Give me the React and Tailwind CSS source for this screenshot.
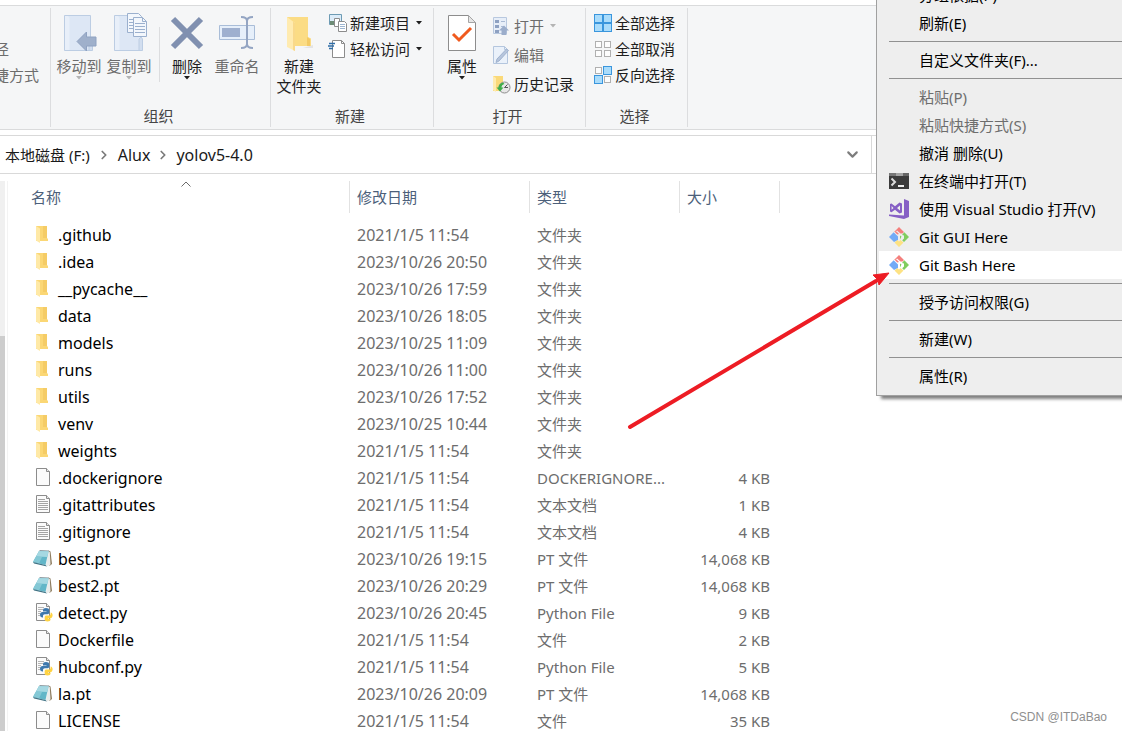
import { useState } from 'react'
import clsx from 'clsx'
import { ChevronDown, ChevronRight } from 'lucide-react'

const FILES = [
  { name: '.github', date: '2021/1/5 11:54', kind: 'folder', type: '文件夹' },
  { name: '.idea', date: '2023/10/26 20:50', kind: 'folder', type: '文件夹' },
  { name: '__pycache__', date: '2023/10/26 17:59', kind: 'folder', type: '文件夹' },
  { name: 'data', date: '2023/10/26 18:05', kind: 'folder', type: '文件夹' },
  { name: 'models', date: '2023/10/25 11:09', kind: 'folder', type: '文件夹' },
  { name: 'runs', date: '2023/10/26 11:00', kind: 'folder', type: '文件夹' },
  { name: 'utils', date: '2023/10/26 17:52', kind: 'folder', type: '文件夹' },
  { name: 'venv', date: '2023/10/25 10:44', kind: 'folder', type: '文件夹' },
  { name: 'weights', date: '2021/1/5 11:54', kind: 'folder', type: '文件夹' },
  { name: '.dockerignore', date: '2021/1/5 11:54', kind: 'blank', type: 'DOCKERIGNORE...', size: '4 KB' },
  { name: '.gitattributes', date: '2021/1/5 11:54', kind: 'text', type: '文本文档', size: '1 KB' },
  { name: '.gitignore', date: '2021/1/5 11:54', kind: 'text', type: '文本文档', size: '4 KB' },
  { name: 'best.pt', date: '2023/10/26 19:15', kind: 'pt', type: 'PT 文件', size: '14,068 KB' },
  { name: 'best2.pt', date: '2023/10/26 20:29', kind: 'pt', type: 'PT 文件', size: '14,068 KB' },
  { name: 'detect.py', date: '2023/10/26 20:45', kind: 'python', type: 'Python File', size: '9 KB' },
  { name: 'Dockerfile', date: '2021/1/5 11:54', kind: 'blank', type: '文件', size: '2 KB' },
  { name: 'hubconf.py', date: '2021/1/5 11:54', kind: 'python', type: 'Python File', size: '5 KB' },
  { name: 'la.pt', date: '2023/10/26 20:09', kind: 'pt', type: 'PT 文件', size: '14,068 KB' },
  { name: 'LICENSE', date: '2021/1/5 11:54', kind: 'blank', type: '文件', size: '35 KB' },
]

const MENU = [
  { label: '分组依据(P)' },
  { label: '刷新(E)' },
  { separator: true },
  { label: '自定义文件夹(F)...' },
  { separator: true },
  { label: '粘贴(P)', disabled: true },
  { label: '粘贴快捷方式(S)', disabled: true },
  { label: '撤消 删除(U)' },
  { label: '在终端中打开(T)', icon: TerminalIcon },
  { label: '使用 Visual Studio 打开(V)', icon: VisualStudioIcon },
  { label: 'Git GUI Here', icon: GitIcon },
  { label: 'Git Bash Here', icon: GitIcon },
  { separator: true },
  { label: '授予访问权限(G)' },
  { separator: true },
  { label: '新建(W)' },
  { separator: true },
  { label: '属性(R)' },
]

/* ---------- Menu icons ---------- */

function TerminalIcon() {
  return (
    <svg width="20" height="20" viewBox="0 0 20 20">
      <path d="M0 2h20v16H0z" fill="#3b3b3b" />
      <path d="M0 2h7v3H0z" fill="#777" />
      <path d="M7 2h7v3H7z" fill="#a3a3a3" />
      <path d="M14 2h6v3h-6z" fill="#666" />
      <path d="M2.500 7.500L6 11l-3.500 3.500" fill="none" stroke="#ddd" strokeWidth="2" />
      <path d="M9 14h6v2H9z" fill="#eee" />
    </svg>
  )
}

function VisualStudioIcon() {
  return (
    <svg width="20" height="20" viewBox="0 0 20 20" fill="#865fc5">
      <path d="M15 0l5 2v16l-5 2-15-3v-1.500l15 1z" />
      <path
        d="M1 5l1.500-.5L6 7.300l4.500-3.800L13 4.500v9L10.500 14.500 6 10.800 2.500 13.200 1 12.600zM2.600 7v3.800L4.500 9zM8 9l3 2.500v-5z"
        fillRule="evenodd"
      />
    </svg>
  )
}

function GitIcon() {
  return (
    <svg width="20" height="20" viewBox="0 0 20 20">
      <path d="M10 0l5 5-1.500 1.500-2 0L8 3.500 6.500 5 5 5z" fill="#f47f7c" />
      <path d="M7.500 4.500L10 7l-1.500.5-2.500-2z" fill="#f47f7c" />
      <path d="M4.700 5.300L9 9.600V13l-4 2L0 10z" fill="#72aaf6" />
      <path d="M15.300 5.300L20 10l-5 5-1.800-1.800 1.800-1.700v-3l-2-.5z" fill="#80cd5e" />
      <path d="M11 8.500l1.500 1-1.500 3z" fill="#80cd5e" />
      <path d="M5.500 15.500l3-2.500 1.500 1.500 1.500-1.500 3 2.500L10 20z" fill="#fde283" />
    </svg>
  )
}

/* ---------- File icons ---------- */

function FileIcon({ kind }) {
  if (kind === 'folder') {
    return (
      <svg width="20" height="20" viewBox="0 0 20 20">
        <path d="M3 1h11v12l1 1v2H3z" fill="#fbd775" />
        <path d="M10 1h4v12h-4z" fill="#f5cc66" />
        <path d="M3 1l4 2.500V18l-4-2.500z" fill="#ffe9a6" />
      </svg>
    )
  }
  if (kind === 'pt') {
    return (
      <svg width="20" height="20" viewBox="0 0 20 20">
        <path d="M15.500 1.500l2 1L19 15l-2.500 2z" fill="#8c7a5c" />
        <path d="M15 2l1.800 1 .7 12.500-3.500 2-1-2z" fill="#e9eceb" />
        <path d="M6.500 1L16 1.500v1l-9.500-.5z" fill="#8d9aa0" />
        <path d="M6 2l9.500 0.500-3 13.500L0 13z" fill="#62b6c8" />
        <path d="M6 2l9.500.5-1.200 5.500L3 7.500z" fill="#a5d8e2" />
        <path d="M3 7.500L9 8 6 14.500 0 13z" fill="#84c8d5" />
        <path d="M0 13l12.500 3 1.500 1.500L1 14.500z" fill="#3f7284" />
      </svg>
    )
  }
  return (
    <svg width="20" height="20" viewBox="0 0 20 20">
      <path d="M3.500.5h10l3 3v14h-13z" fill="#fbfbfb" stroke="#8c8c8c" />
      <path d="M13.500.5v3h3" fill="#e8e8e8" stroke="#8c8c8c" />
      {kind === 'text' && (
        <path d="M5 4.500h7M5 6.500h10M5 8.500h10M5 10.500h10M5 12.500h10M5 14.500h10" stroke="#a4a4a4" />
      )}
      {kind === 'python' && (
        <>
          <path d="M5 4.500h6M5 6.500h5M5 8.500h3M5 10.500h2M5 12.500h2" stroke="#b5b5b5" />
          <path
            d="M13 5c-2 0-3 .7-3 2v1.500h3.500v.5H9.500c-1.500 0-2.500 1-2.500 2.800s1 2.800 2.500 2.800h.5v-1.600c0-1 .8-1.700 1.800-1.700h2.700c1 0 1.700-.8 1.700-1.700V7c0-1.300-1.200-2-3.200-2z"
            fill="#3d78ad"
          />
          <path
            d="M14.500 18.500c-2 0-2.800-.7-2.800-2v-2.300c0-1 .8-1.700 1.700-1.700h2.600c1 0 1.600-.8 1.600-1.800V9.500c1.300.2 2 1.300 2 2.700s-.8 3-2.200 3h-2.400v.6H17.500v.8c0 1.300-1 1.900-3 1.900z"
            fill="#ffd343"
          />
        </>
      )}
    </svg>
  )
}

/* ---------- Ribbon icons ---------- */

function PaleFolder() {
  return (
    <>
      <path d="M3.500 3.500h26v35h-26z" fill="#dde7f5" stroke="#bccde3" />
      <path d="M4 4h3l1.500 2v32H4z" fill="#e8eff9" />
      <path d="M28 38.500V27l2-2 1.500 2v11.500z" fill="#d2deef" stroke="#bccde3" />
    </>
  )
}

function MoveIcon() {
  return (
    <svg width="36" height="40" viewBox="0 0 36 40">
      <PaleFolder />
      <path d="M16 29.500L25.500 20v5H35v9h-9.500v5z" fill="#9fb0cb" stroke="#8fa2c1" />
    </svg>
  )
}

function CopyIcon() {
  return (
    <svg width="36" height="40" viewBox="0 0 36 40">
      <PaleFolder />
      <path d="M16.500 1.500h11l3 3v16h-14z" fill="#f3f7fc" stroke="#9bb0ce" />
      <path d="M18 7.500h4M18 10.500h4M18 13.500h4M18 16.500h4" stroke="#9bb0ce" />
      <path d="M22.500 5.500h9l4 4v15h-13z" fill="#f3f7fc" stroke="#9bb0ce" />
      <path d="M31.500 5.500v4h4M24 11.500h10M24 14.500h10M24 17.500h10M24 20.500h10" fill="none" stroke="#9bb0ce" />
    </svg>
  )
}

function DeleteIcon() {
  return (
    <svg width="36" height="40" viewBox="0 0 36 40">
      <path d="M4 7L32 35M32 7L4 35" stroke="#8090b0" strokeWidth="6" />
    </svg>
  )
}

function RenameIcon() {
  return (
    <svg width="38" height="40" viewBox="0 0 38 40">
      <path d="M1.500 13.500h35v14h-35z" fill="#e6effa" stroke="#a9bdd8" />
      <path d="M4 16h18v9H4z" fill="#9fb0cf" />
      <path d="M23 5c4 0 6 1 6 4v23c0 3-2 4-6 4M35 5c-4 0-6 1-6 4v23c0 3 2 4 6 4" fill="none" stroke="#94a5c3" strokeWidth="2" />
    </svg>
  )
}

function NewFolderIcon() {
  return (
    <svg width="36" height="40" viewBox="0 0 36 40">
      <path d="M22 36l10-3v3z" fill="#e4e4e4" />
      <path d="M6 5h21v20l3 1.500V34H6z" fill="#fbdc85" />
      <path d="M26 5v20l3 2v7h-3z" fill="#f3ca65" />
      <path d="M6 5l8 6v28l-8-4z" fill="#ffebb0" />
      <path d="M12 9.500l2 1.500v28l-2-1z" fill="#f9d98b" />
    </svg>
  )
}

function PropertiesIcon() {
  return (
    <svg width="36" height="40" viewBox="0 0 36 40">
      <path d="M4.500 3.500h20l7 7v28h-27z" fill="#fff" stroke="#8d8d8d" />
      <path d="M24.500 3.500v7h7z" fill="#e6e6e6" stroke="#a5a5a5" />
      <path d="M9 22l6 6 12-12" fill="none" stroke="#f05a1e" strokeWidth="3" />
    </svg>
  )
}

function NewItemIcon() {
  return (
    <svg width="20" height="20" viewBox="0 0 20 20">
      <path d="M1.500 1.500h12v10h-12z" fill="#dcecf9" stroke="#6d9bb4" />
      <path d="M2 8h12v4H2z" fill="#6d8c76" />
      <path d="M6.500 5.500h5v8h-5z" fill="#fff" stroke="#8c8c8c" />
      <path d="M10.500 8.500h6l2 2v8h-8z" fill="#fff" stroke="#8c8c8c" />
      <path d="M12 11.500h5M12 13.500h5M12 15.500h5" stroke="#9db5d0" />
    </svg>
  )
}

function EasyAccessIcon() {
  return (
    <svg width="20" height="20" viewBox="0 0 20 20">
      <path d="M4.500 1.500h9l3 3v14h-12z" fill="#fff" stroke="#8c8c8c" />
      <path d="M13.500 1.500v3h3" fill="none" stroke="#8c8c8c" />
      <path d="M1 4.500h6M0 7h6M1 9.500h4" stroke="#2f6ea8" strokeWidth="1.300" />
    </svg>
  )
}

function OpenIcon() {
  return (
    <svg width="20" height="20" viewBox="0 0 20 20">
      <path d="M1.500 1.500h13v16h-13z" fill="#e7eef8" stroke="#b8c8df" />
      <path d="M3 4h4v3H3zM3 9h4v3H3zM3 14h4v3H3z" fill="#8ea1c2" />
      <path d="M9 5.500h4M9 10.500h3" stroke="#a9bad4" />
      <path d="M12 9.500l5 5h-2.500V19h-5v-4.500H7z" fill="#9badcb" />
    </svg>
  )
}

function EditIcon() {
  return (
    <svg width="20" height="20" viewBox="0 0 20 20">
      <path d="M1.500 1.500h11l3 3v14h-14z" fill="#eaf1fa" stroke="#b4c6de" />
      <path d="M12.500 1.500v3h3" fill="none" stroke="#b4c6de" />
      <path d="M14.500 4l2 1.500L7 16l-3 1.500L5 14z" fill="#b6c5dc" stroke="#a0b3cf" />
    </svg>
  )
}

function HistoryIcon() {
  return (
    <svg width="20" height="20" viewBox="0 0 20 20">
      <path d="M1 2h10v15H1z" fill="#fad979" />
      <path d="M1 2l3 2v14l-3-2z" fill="#ffebae" />
      <circle cx="12.500" cy="13.500" r="5.500" fill="#e7e7e7" stroke="#8d8d8d" />
      <path d="M12.500 13.500l3-3M12.500 13.500h3.500" stroke="#555" />
      <path d="M11 8.500c-3 .5-4.500 3-4.500 5H4.500l3.500 4 3.500-4h-2c0-2 1-3 3-3.500z" fill="#3fae49" />
    </svg>
  )
}

function SelectGridIcon({ filled }) {
  const cells = [
    [1, 1],
    [10, 1],
    [1, 10],
    [10, 10],
  ]
  return (
    <svg width="20" height="20" viewBox="0 0 20 20">
      {cells.map(([x, y], i) => {
        const on = filled.includes(i)
        return (
          <rect
            key={i}
            x={on ? x + 0.5 : x + 1.5}
            y={on ? y + 0.5 : y + 1.5}
            width={on ? 8 : 6}
            height={on ? 8 : 6}
            fill={on ? '#aadcfb' : '#fdfdfd'}
            stroke={on ? '#3a96dd' : '#b0b0b0'}
          />
        )
      })}
    </svg>
  )
}

/* ---------- Ribbon ---------- */

function Caret({ className }) {
  return (
    <svg width="6" height="4" viewBox="0 0 6 4" className={className}>
      <path d="M0 0h6L3 3.500z" fill="currentColor" />
    </svg>
  )
}

function BigButton({ icon, lines, disabled, caret }) {
  return (
    <button
      disabled={disabled}
      className={clsx(
        'w-[50px] shrink-0 flex flex-col items-center leading-5 whitespace-nowrap',
        disabled ? 'text-[#6d6d6d]' : 'text-[#1e1e1e]'
      )}
    >
      <span className="h-11 flex items-end">{icon}</span>
      <span className="mt-1">
        {lines.map((line) => (
          <span key={line} className="block">
            {line}
          </span>
        ))}
      </span>
      {caret && <Caret className={disabled ? 'text-[#b4b4b4]' : 'text-[#1e1e1e]'} />}
    </button>
  )
}

function SmallButton({ icon, label, disabled, caret }) {
  return (
    <button
      disabled={disabled}
      className={clsx(
        'flex items-center gap-0.5 h-[26px] whitespace-nowrap',
        disabled ? 'text-[#6d6d6d]' : 'text-[#1e1e1e]'
      )}
    >
      {icon}
      {label}
      {caret && <Caret className={clsx('ml-1', disabled ? 'text-[#b4b4b4]' : 'text-[#1e1e1e]')} />}
    </button>
  )
}

function RibbonGroup({ label, className, children }) {
  return (
    <section className={clsx('shrink-0 my-0.5 border-r border-[#dcdddf] flex flex-col', className)}>
      <div className="flex-1 flex pl-[3px]">{children}</div>
      {label && <h2 className="h-[21px] leading-5 pr-1 text-center text-[#454545]">{label}</h2>}
    </section>
  )
}

function Ribbon() {
  return (
    <header className="mt-[5px] h-[125px] flex border-y border-[#dadbdc] bg-[#f5f6f7]">
      <RibbonGroup className="w-[51px] overflow-hidden">
        <div className="w-full flex justify-end pr-[11px] pt-7">
          <div className="w-[90px] shrink-0">
            <SmallButton label="复制路径" disabled />
            <SmallButton label="粘贴快捷方式" disabled />
          </div>
        </div>
      </RibbonGroup>

      <RibbonGroup label="组织" className="w-[220px]">
        <BigButton icon={<MoveIcon />} lines={['移动到']} disabled caret />
        <BigButton icon={<CopyIcon />} lines={['复制到']} disabled caret />
        <div className="ml-[5px] mr-0.5 mt-[19px] w-px h-[55px] bg-[#dcdddf]" />
        <BigButton icon={<DeleteIcon />} lines={['删除']} caret />
        <BigButton icon={<RenameIcon />} lines={['重命名']} disabled />
      </RibbonGroup>

      <RibbonGroup label="新建" className="w-[163px]">
        <BigButton icon={<NewFolderIcon />} lines={['新建', '文件夹']} />
        <div className="pl-1 pt-0.5">
          <SmallButton icon={<NewItemIcon />} label="新建项目" caret />
          <SmallButton icon={<EasyAccessIcon />} label="轻松访问" caret />
        </div>
      </RibbonGroup>

      <RibbonGroup label="打开" className="w-[152px]">
        <BigButton icon={<PropertiesIcon />} lines={['属性']} caret />
        <div className="pl-[5px] pt-[5px] flex flex-col gap-[3px]">
          <SmallButton icon={<OpenIcon />} label="打开" disabled caret />
          <SmallButton icon={<EditIcon />} label="编辑" disabled />
          <SmallButton icon={<HistoryIcon />} label="历史记录" />
        </div>
      </RibbonGroup>

      <RibbonGroup label="选择" className="w-[102px]">
        <div className="pl-1 pt-0.5">
          <SmallButton icon={<SelectGridIcon filled={[0, 1, 2, 3]} />} label="全部选择" />
          <SmallButton icon={<SelectGridIcon filled={[]} />} label="全部取消" />
          <SmallButton icon={<SelectGridIcon filled={[1, 2]} />} label="反向选择" />
        </div>
      </RibbonGroup>
    </header>
  )
}

function AddressBar() {
  return (
    <div className="mt-[5px] h-[39px] flex border-y border-[#d9d9d9]">
      <nav className="flex-1 flex items-center pl-[5px] pr-[10px] border-r border-[#d9d9d9] text-[#1a1a1a]">
        <button>本地磁盘 (F:)</button>
        <ChevronRight size={14} strokeWidth={3} className="mx-[7px] text-[#7a7a7a]" />
        <button className="text-base leading-5">Alux</button>
        <ChevronRight size={14} strokeWidth={3} className="mx-[6px] text-[#7a7a7a]" />
        <button className="text-base leading-5">yolov5-4.0</button>
        <button className="ml-auto" aria-label="以前的位置">
          <ChevronDown size={17} strokeWidth={3} className="text-[#7d7d7d]" />
        </button>
      </nav>
      <div className="w-[250px]" />
    </div>
  )
}

/* ---------- File list ---------- */

function ColumnHeader({ children, sorted, className }) {
  return (
    <th className="p-0 h-10 align-top font-normal text-left">
      <button
        className={clsx(
          'relative w-full h-8 flex items-center border-r border-[#e2e2e2] text-[#4c607a]',
          className
        )}
      >
        {children}
        {sorted && (
          <svg width="10" height="6" viewBox="0 0 10 6" className="absolute top-0 left-[173px]">
            <path d="M.5 5.500L5 1l4.500 4.500" fill="none" stroke="#6b6b6b" />
          </svg>
        )}
      </button>
    </th>
  )
}

function FileTable() {
  return (
    <table className="w-[772px] table-fixed border-collapse text-[#6d6d6d] whitespace-nowrap">
      <colgroup>
        <col className="w-[342px]" />
        <col className="w-[180px]" />
        <col className="w-[150px]" />
        <col className="w-[100px]" />
      </colgroup>
      <thead>
        <tr>
          <ColumnHeader sorted className="pl-[23px]">
            名称
          </ColumnHeader>
          <ColumnHeader className="pl-[7px]">修改日期</ColumnHeader>
          <ColumnHeader className="pl-[7px]">类型</ColumnHeader>
          <ColumnHeader className="pl-[7px]">大小</ColumnHeader>
        </tr>
      </thead>
      <tbody>
        {FILES.map((file) => (
          <tr key={file.name} className="h-[27px]">
            <td className="p-0 pl-[25px]">
              <div className="flex items-center gap-[5px] text-base leading-5 text-black">
                <FileIcon kind={file.kind} />
                {file.name}
              </div>
            </td>
            <td className="p-0 pl-[7px] text-base leading-5">{file.date}</td>
            <td className="p-0 pl-[7px]">{file.type}</td>
            <td className="p-0 pr-[10px] text-right">{file.size}</td>
          </tr>
        ))}
      </tbody>
    </table>
  )
}

/* ---------- Context menu ---------- */

function ContextMenu() {
  const [active, setActive] = useState('Git Bash Here')

  return (
    <div
      role="menu"
      className="absolute -top-[19px] right-0 w-[246px] pb-[5px] pl-0.5 bg-[#eeeeee]
        border-l border-b border-[#a0a0a0] shadow-[4px_4px_3px_-1px_rgba(0,0,0,0.5)]"
    >
      {MENU.map((item, i) => {
        if (item.separator) {
          return (
            <div key={i} className="h-[9px] pl-[10px] flex items-center">
              <div className="h-px flex-1 bg-[#919191]" />
            </div>
          )
        }
        const Icon = item.icon
        return (
          <button
            key={i}
            role="menuitem"
            disabled={item.disabled}
            onMouseEnter={() => setActive(item.label)}
            className={clsx(
              'w-full h-7 pl-[10px] flex items-center gap-[10px] whitespace-nowrap',
              item.disabled ? 'text-[#6d6d6d]' : 'text-black',
              active === item.label && 'bg-white'
            )}
          >
            <span className="w-5 shrink-0">{Icon && <Icon />}</span>
            {item.label}
          </button>
        )
      })}
    </div>
  )
}

function PointerArrow() {
  return (
    <svg width="264" height="160" viewBox="0 0 264 160" className="absolute top-[271px] right-[232px] pointer-events-none">
      <path d="M4 156L250 10" stroke="#ed1c24" strokeWidth="4" strokeLinecap="round" />
      <path d="M263 2L253 14l-1-5-5-5z" fill="#ed1c24" stroke="#ed1c24" strokeWidth="1" />
    </svg>
  )
}

export default function App() {
  return (
    <div
      className="relative h-screen flex flex-col overflow-hidden bg-white text-[15px] leading-5
        font-['Noto_Sans','Noto_Sans_CJK_SC',sans-serif]"
    >
      <Ribbon />
      <AddressBar />
      <main className="flex-1 min-h-0 flex mt-[7px]">
        {/* Navigation pane scrollbar */}
        <div className="w-[5px] bg-[#f0f0f0] flex flex-col">
          <div className="flex-1 mt-[155px] bg-[#cdcdcd]" />
        </div>
        <div className="ml-0.5 w-px bg-[#f3f3f3]" />
        <FileTable />
      </main>
      <ContextMenu />
      <PointerArrow />
      <p className="absolute bottom-1 right-[15px] text-xs leading-5 text-[#8f8f8f] font-['Liberation_Sans',sans-serif]">
        CSDN @ITDaBao
      </p>
    </div>
  )
}
